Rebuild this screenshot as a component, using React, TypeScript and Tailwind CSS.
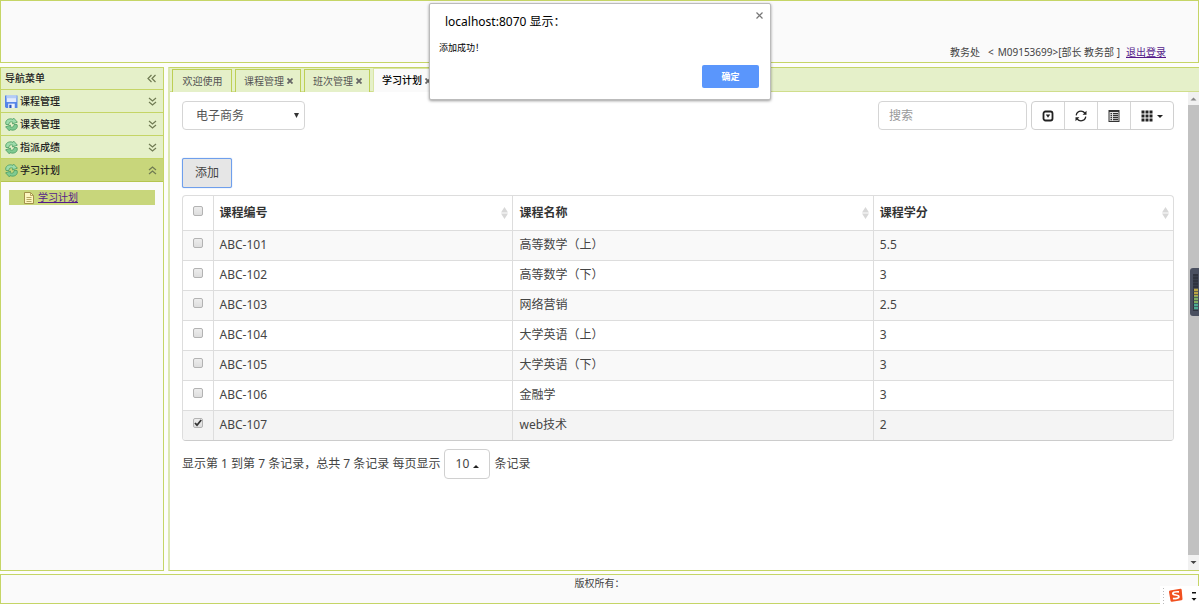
import { useState } from "react";
import type { ReactNode } from "react";

const courses = [
  ["ABC-101", "高等数学（上）", "5.5"],
  ["ABC-102", "高等数学（下）", "3"],
  ["ABC-103", "网络营销", "2.5"],
  ["ABC-104", "大学英语（上）", "3"],
  ["ABC-105", "大学英语（下）", "3"],
  ["ABC-106", "金融学", "3"],
  ["ABC-107", "web技术", "2"],
];

function SaveIcon() {
  return (
    <svg viewBox="0 0 12 12" className="size-[13px] shrink-0">
      <path d="M0 .5h11.500V12H1L0 11z" fill="#5585e8" />
      <path d="M1.500 .5h9V6.500h-9z" fill="#e3ecfd" />
      <path d="M1.500 .5h9V3h-9z" fill="#b4ccf6" />
      <path d="M3 8h6v4H3z" fill="#eef3fc" />
      <path d="M4 9h2v3H4z" fill="#2c53b8" />
    </svg>
  );
}

function CycleIcon() {
  return (
    <svg viewBox="0 0 13 13" className="size-[13px] shrink-0" stroke="#4b9c62" strokeWidth=".8" strokeLinejoin="round">
      <path d="M1 6.500C-.5 2.500 3.500-.3 8 1.300L8.800.2l3.600 4-5 1.700.5-1.700C5.700 3.300 3.800 4 4 6.500z" fill="#9edcab" />
      <path d="M12 6.500c1.500 4-2.500 6.800-7 5.200l-.8 1.100-3.600-4 5-1.700-.5 1.700c2.200.9 4.100.2 3.900-2.300z" fill="#7fca91" />
    </svg>
  );
}

function PageIcon() {
  return (
    <svg viewBox="0 0 10 12" className="h-3 w-2.5 shrink-0">
      <path d="M.5.5h6l3 3v8h-9z" fill="#fdf6c0" stroke="#a3924a" />
      <path d="M6.500.5v3h3M2.500 5.500h5M2.500 7.500h5M2.500 9.500h5" fill="none" stroke="#a3924a" strokeWidth=".8" />
    </svg>
  );
}

function Chevrons({ turn }: { turn: "left" | "down" | "up" }) {
  const path = {
    left: "M4.500 1L1 4.500 4.500 8M8.500 1L5 4.500 8.500 8",
    down: "M1 1l3.500 3L8 1M1 5l3.500 3L8 5",
    up: "M1 4l3.500-3L8 4M1 8l3.500-3L8 8",
  }[turn];
  return (
    <svg viewBox="0 0 9 9" className="size-[9px] shrink-0" fill="none" stroke="#6f7a52" strokeWidth="1.200">
      <path d={path} />
    </svg>
  );
}

function Menu({ icon, label, open = false }: { icon: ReactNode; label: string; open?: boolean }) {
  return (
    <button
      type="button"
      aria-expanded={open}
      className={
        open
          ? "flex h-[23px] w-full items-center gap-0.5 border-b border-[#b5c54f] bg-[#c8d67b] pr-1.5 pl-1"
          : "flex h-[23px] w-full items-center gap-0.5 border-b border-[#c5d566] bg-[#e5f0c9] pr-1.5 pl-1"
      }
    >
      {icon}
      <span className="grow text-left font-medium">{label}</span>
      <Chevrons turn={open ? "up" : "down"} />
    </button>
  );
}

function Tab({ label, closable = true, active = false }: { label: string; closable?: boolean; active?: boolean }) {
  return (
    <div
      className={
        active
          ? "flex h-6 min-w-15 items-center justify-center gap-[3px] border border-b-0 border-[#d9e5a4] bg-[#fafafa] pr-[7px] pl-2 font-medium text-black"
          : "flex h-[23px] min-w-15 items-center justify-center gap-[3px] border border-b-0 border-[#bdcf55] bg-[#e5f0c9] pr-[7px] pl-2 text-[#555]"
      }
    >
      <button type="button" className="whitespace-nowrap">{label}</button>
      {closable && (
        <button type="button" aria-label={"关闭" + label}>
          <svg viewBox="0 0 6 6" className="size-1.5" stroke="#666" strokeWidth="1.800">
            <path d="M.5.5l5 5M5.500.5l-5 5" />
          </svg>
        </button>
      )}
    </div>
  );
}

function SortMark() {
  return (
    <svg viewBox="0 0 7 12" className="h-3 w-[7px]" fill="#d8d8d8">
      <path d="M3.500 0L7 5.500H0zM3.500 12L0 6.500h7z" />
    </svg>
  );
}

function Tick({ label, checked, onChange }: { label: string; checked: boolean; onChange: () => void }) {
  return (
    <span className="relative mx-auto block size-2.5 -translate-y-0.5">
      <input
        type="checkbox"
        aria-label={label}
        checked={checked}
        onChange={onChange}
        className="block size-2.5 appearance-none rounded-xs border border-[#b3b3b3] bg-linear-to-b from-[#ededed] to-[#dedede]"
      />
      {checked && (
        <svg viewBox="0 0 10 10" className="pointer-events-none absolute inset-0 size-2.5" fill="none" stroke="#333" strokeWidth="1.800">
          <path d="M2 5l2 2.200L8.200 2" />
        </svg>
      )}
    </span>
  );
}

export default function App() {
  const [picked, setPicked] = useState<string[]>(["ABC-107"]);
  const toggle = (id: string) =>
    setPicked((now) => (now.includes(id) ? now.filter((n) => n !== id) : [...now, id]));
  const all = picked.length === courses.length;

  return (
    <div className="relative flex min-h-screen flex-col gap-1 bg-[#fdfdfb] font-['Noto_Sans','Noto_Sans_CJK_SC',sans-serif] text-[10px] text-[#444]">
      <header className="flex h-[63px] items-end justify-end gap-1.5 border border-[#c5d566] bg-[#fafafa] pr-8 pb-0.5 leading-4">
        <span className="flex gap-2">
          <span>教务处</span>
          <span className="flex gap-1">
            <span>&lt;</span>
            <span>M09153699&gt;[部长 教务部 ]</span>
          </span>
        </span>
        <a href="#logout" className="text-[#551a8b] underline">退出登录</a>
      </header>

      <div className="flex grow gap-1">
        <nav className="w-41 shrink-0 border border-[#c5d566] bg-[#fafafa] text-[#222]">
          <div className="flex h-[22px] items-center justify-between border-b border-[#c5d566] bg-[#e5f0c9] pr-[7px] pl-1 font-medium">
            导航菜单
            <button type="button" aria-label="收起"><Chevrons turn="left" /></button>
          </div>
          <Menu icon={<SaveIcon />} label="课程管理" />
          <Menu icon={<CycleIcon />} label="课表管理" />
          <Menu icon={<CycleIcon />} label="指派成绩" />
          <Menu icon={<CycleIcon />} label="学习计划" open />
          <div className="mx-2 mt-2 flex h-[15px] items-center gap-1 bg-[#c8d67b] pl-[15px]">
            <PageIcon />
            <a href="#plan" className="text-[#551a8b] underline">学习计划</a>
          </div>
        </nav>

        <main className="flex min-w-0 grow flex-col border-y border-l-2 border-y-[#c5d566] border-l-[#dde8b2] bg-white">
          <div className="flex h-6 shrink-0 items-end border-b border-[#d0de8c] bg-[#e5f0c9] pl-0.5">
            <div className="-mb-px flex items-end gap-[3px]">
              <Tab label="欢迎使用" closable={false} />
              <Tab label="课程管理" />
              <Tab label="班次管理" />
              <Tab label="学习计划" active />
            </div>
          </div>

          <div className="flex grow">
            <section className="min-w-0 grow pt-[9px] pr-3.5 pl-3 text-xs">
              <div className="flex items-center justify-between">
                <div className="relative">
                  <select aria-label="专业" className="block h-[29px] w-[123px] appearance-none rounded border border-[#d5d5d5] bg-white pl-[13px] text-[#555]">
                    <option>电子商务</option>
                  </select>
                  <svg viewBox="0 0 5 5" className="pointer-events-none absolute top-3 right-1.5 size-[5px]" fill="#333">
                    <path d="M0 0h5L2.500 5z" />
                  </svg>
                </div>
                <div className="flex gap-1">
                  <input
                    type="search"
                    aria-label="搜索"
                    placeholder="搜索"
                    className="h-[29px] w-[149px] rounded border border-[#d5d5d5] bg-white px-2.5 placeholder:text-[#999]"
                  />
                  <div className="flex h-[29px] divide-x divide-[#d5d5d5] rounded border border-[#d0d0d0] text-[#333]">
                    <button type="button" aria-label="分页" className="grid w-[33px] place-items-center">
                      <svg viewBox="0 0 12 12" className="size-3">
                        <rect x="1.500" y="1.500" width="9" height="9" rx="2" fill="none" stroke="#222" strokeWidth="1.800" />
                        <path d="M3.800 4.600h4.400L6 7.800z" fill="#222" />
                      </svg>
                    </button>
                    <button type="button" aria-label="刷新" className="grid w-[33px] place-items-center">
                      <svg viewBox="0 0 12 12" className="size-3" fill="none" stroke="#222" strokeWidth="1.300">
                        <path d="M1.200 5.300C1.700 2.700 3.600 1.200 6 1.200c1.500 0 2.900.7 3.800 1.800M10.800 6.700c-.5 2.600-2.400 4.100-4.800 4.100-1.500 0-2.900-.7-3.800-1.800" />
                        <path d="M11.500.8v4H7.600zM.5 11.200v-4h3.900z" fill="#222" stroke="none" />
                      </svg>
                    </button>
                    <button type="button" aria-label="视图" className="grid w-[33px] place-items-center">
                      <svg viewBox="0 0 12 12" className="size-3">
                        <path d="M.5 0H11.500v12H.5z" fill="#333" />
                        <path d="M1.500 2h9v9h-9z" fill="#e4e4e4" />
                        <path d="M2.500 3H4v1.300H2.500zm2.500 0h5v1.300H5zM2.500 5H4v1.300H2.500zM5 5h5v1.300H5zM2.500 7H4v1.300H2.500zM5 7h5v1.300H5zM2.500 9H4v1.300H2.500zM5 9h5v1.300H5z" fill="#333" />
                      </svg>
                    </button>
                    <button type="button" aria-label="列" className="flex w-[42px] items-center justify-center gap-1">
                      <svg viewBox="0 0 12 12" className="size-3" fill="#222">
                        <path d="M.5.500h3v3h-3zm4 0h3v3h-3zm4 0h3v3h-3zM.5 4.500h3v3h-3zm4 0h3v3h-3zm4 0h3v3h-3zM.5 8.500h3v3h-3zm4 0h3v3h-3zm4 0h3v3h-3z" />
                      </svg>
                      <svg viewBox="0 0 6 3" className="mt-0.5 h-[3px] w-1.5" fill="#222"><path d="M0 0h6L3 3z" /></svg>
                    </button>
                  </div>
                </div>
              </div>

              <button type="button" className="mt-7 block h-[30px] w-[50px] rounded-xs border border-[#6f9fec] bg-[#e6e6e6] text-[#444] shadow-[0_0_1px_#6f9fec]">
                添加
              </button>

              <div className="mt-[7px] overflow-hidden rounded border border-[#ddd] border-b-[#ccc]">
                <table className="w-full table-fixed border-collapse text-left">
                  <colgroup>
                    <col className="w-[30px]" />
                    <col className="w-[30.300%]" />
                    <col className="w-[36.400%]" />
                    <col />
                  </colgroup>
                  <thead className="text-[#333]">
                    <tr className="h-[34px] border-b border-[#ddd]">
                      <th className="border-r border-[#ddd]">
                        <Tick label="全选" checked={all} onChange={() => setPicked(all ? [] : courses.map((c) => c[0]))} />
                      </th>
                      {["课程编号", "课程名称", "课程学分"].map((name) => (
                        <th key={name} className="border-r border-[#ddd] pr-1 pl-1.5 last:border-r-0">
                          <div className="flex items-center justify-between">{name}<SortMark /></div>
                        </th>
                      ))}
                    </tr>
                  </thead>
                  <tbody>
                    {courses.map(([id, name, credit], i) => (
                      <tr
                        key={id}
                        className={
                          picked.includes(id)
                            ? "h-[30px] border-b border-[#ddd] bg-[#f4f4f4] last:border-b-0"
                            : i % 2
                              ? "h-[30px] border-b border-[#ddd] last:border-b-0"
                              : "h-[30px] border-b border-[#ddd] bg-[#f9f9f9] last:border-b-0"
                        }
                      >
                        <td className="border-r border-[#ddd]">
                          <Tick label={id} checked={picked.includes(id)} onChange={() => toggle(id)} />
                        </td>
                        <td className="border-r border-[#ddd] pl-1.5">{id}</td>
                        <td className="border-r border-[#ddd] pl-1.5">{name}</td>
                        <td className="pl-1.5">{credit}</td>
                      </tr>
                    ))}
                  </tbody>
                </table>
              </div>

              <div className="mt-2 flex items-center gap-1">
                <span>显示第 1 到第 7 条记录，总共 7 条记录 每页显示</span>
                <button type="button" className="flex h-[30px] w-[46px] items-center justify-center gap-1 rounded border border-[#d0d0d0]">
                  10
                  <svg viewBox="0 0 6 3" className="mt-1 h-[3px] w-1.5" fill="#222"><path d="M0 3h6L3 0z" /></svg>
                </button>
                <span>条记录</span>
              </div>
            </section>

            <div className="flex w-[11px] shrink-0 flex-col bg-[#f1f1f1]">
              <svg viewBox="0 0 11 13" className="h-[13px] w-[11px]"><path d="M2.500 8.500h6l-3-3z" fill="#888" /></svg>
              <div className="grow bg-[#c1c1c1]" />
              <svg viewBox="0 0 11 15" className="h-[15px] w-[11px]"><path d="M2.500 6h6l-3 3z" fill="#444" /></svg>
            </div>
          </div>
        </main>
      </div>

      <footer className="-mt-px h-[30px] border border-[#c5d566] bg-[#fafafa] text-center leading-4">版权所有：</footer>

      <div
        role="dialog"
        aria-label="localhost:8070 显示"
        className="absolute top-[3px] left-[429px] h-[97px] w-[342px] rounded-xs border border-[#bbb] bg-white shadow-[0_1px_3px_rgba(0,0,0,0.4)]"
      >
        <div className="flex items-start justify-between pt-2 pr-[7px] pl-[15px]">
          <h2 className="text-xs leading-5 text-black">localhost:8070 显示：</h2>
          <button type="button" aria-label="关闭">
            <svg viewBox="0 0 7 7" className="size-[7px]" stroke="#777" strokeWidth="1.200"><path d="M.5.5l6 6M6.500.5l-6 6" /></svg>
          </button>
        </div>
        <p className="pt-2 pl-[9px] text-[9px] leading-4 text-black">添加成功！</p>
        <div className="flex justify-end pt-[9px] pr-[11px]">
          <button type="button" className="h-[23px] w-[57px] rounded-xs bg-[#5a96fc] text-[9px] font-bold text-white">确定</button>
        </div>
      </div>

      <svg viewBox="0 0 9 48" className="absolute top-[268px] right-0 h-12 w-[9px]">
        <path d="M9 0H3Q0 0 0 3v42q0 3 3 3h6z" fill="#4a5060" />
        <path d="M3 6h5v37H3z" fill="#30343f" />
        <path d="M4 20h4v8H4z" fill="#b9a545" />
        <path d="M4 28h4v7H4z" fill="#7fae62" />
        <path d="M4 35h4v7H4z" fill="#4dab94" />
        <path d="M3 8.500h5m-5 3h5m-5 3h5m-5 3h5m-5 3h5m-5 3h5m-5 3h5m-5 3h5m-5 3h5m-5 3h5m-5 3h5m-5 3h5" stroke="#3c4350" strokeWidth=".7" />
      </svg>

      <svg viewBox="0 0 39 18" className="absolute right-0 bottom-0 h-[18px] w-[39px]">
        <path d="M0 0h39v18H0z" fill="#fff" />
        <path d="M3.500 2v16" stroke="#bbb" strokeDasharray="1 2" />
        <path d="M10 4.500l10.500-1.700q1-.1 1.200 1L22.500 13q.1 1-1 1.200L12 15.800q-1.300.2-1.500-1L9 6q-.1-1.300 1-1.500z" fill="#f1501f" />
        <path d="M19 5.800q-6-.3-6.200 1.500-.1 1.200 3 1.700 3.400.6 3.100 2-.3 1.700-6 1.700" fill="none" stroke="#fff" strokeWidth="1.700" />
        <path d="M32 6h4v1.500h-4zM31.500 12h5L34 14.700z" fill="#111" />
      </svg>
    </div>
  );
}
